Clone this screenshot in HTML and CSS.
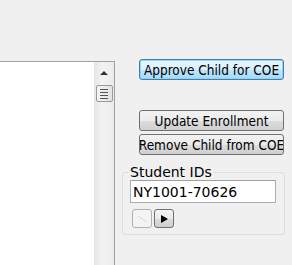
FILE: index.html
```html
<!DOCTYPE html>
<html lang="en">
<head>
 <meta charset="UTF-8">
 <title>Enrollment</title>
 <link rel="stylesheet" href="styles.css">
</head>
<body>
 <div class="window">
  <div class="list">
   <div class="list-body"></div>
   <div class="scrollbar">
    <span class="arrow-up"></span>
    <span class="thumb"><i></i><i></i><i></i><i></i></span>
   </div>
  </div>
  <div class="side">
   <button class="btn btn-default">Approve Child for COE</button>
   <button class="btn btn-update">Update Enrollment</button>
   <button class="btn btn-remove">Remove Child from COE</button>
   <fieldset class="group">
    <legend>Student IDs</legend>
    <input type="text" class="field" value="NY1001-70626">
    <div class="nav">
     <button class="mini" disabled><span class="tri-left"></span></button>
     <button class="mini"><span class="tri-right"></span></button>
    </div>
   </fieldset>
  </div>
 </div>
</body>
</html>
```
FILE: styles.css
```css
body {
 margin: 0;
 background-color: #f0f0f0;
 font-family: 'DejaVu Sans', Verdana, sans-serif;
 font-size: 12px;
 overflow: hidden;
}

.window {
 display: flex;
 padding-top: 59px;
 height: 206px;
}

.list {
 display: flex;
 width: 114px;
 margin-top: 2px;
 border: 1px solid #a0a0a0;
 border-left: none;
 border-bottom: none;
 background-color: #fff;
}

.list-body {
 flex: 1;
}

.scrollbar {
 width: 20px;
 background: linear-gradient(to right, #e6e6e6, #f2f2f2 40%, #ececec);
 display: flex;
 flex-direction: column;
 align-items: center;
}

.arrow-up {
 margin-top: 9px;
 width: 0;
 height: 0;
 border-left: 4px solid transparent;
 border-right: 4px solid transparent;
 border-bottom: 4px solid #333;
}

.thumb {
 margin-top: 10px;
 width: 15px;
 height: 15px;
 border: 1px solid #9a9a9a;
 border-radius: 2px;
 background: linear-gradient(to right, #f4f4f4, #e2e2e2);
 display: flex;
 flex-direction: column;
 align-items: center;
 justify-content: center;
 gap: 2px;
}

.thumb i {
 display: block;
 width: 8px;
 height: 1px;
 background-color: #555;
}

.side {
 width: 162px;
 margin-left: 7px;
 display: flex;
 flex-direction: column;
}

.btn {
 margin-left: 17px;
 width: 145px;
 height: 21px;
 padding: 0;
 font-family: 'DejaVu Sans Condensed', 'DejaVu Sans', sans-serif;
 font-size: 13.5px;
 color: #000;
 border: 1px solid #707070;
 border-radius: 3px;
 background: linear-gradient(#f2f2f2 0%, #ebebeb 50%, #dddddd 51%, #cfcfcf 100%);
 white-space: nowrap;
 overflow: hidden;
 display: flex;
 justify-content: center;
 align-items: center;
}

.btn-default {
 border-color: #3c7fb1;
 background: linear-gradient(#eaf6fd 0%, #d9f0fc 50%, #bee6fd 51%, #a7d9f5 100%);
 box-shadow: inset 0 0 0 1px #8fd3f7;
}

.btn-update {
 margin-top: 30px;
}

.btn-remove {
 margin-top: 3px;
}

.group {
 margin: 10px 0 0 0;
 padding: 0 0 6px 7px;
 width: 154px;
 border: 1px solid #d5dfe5;
 border-radius: 3px;
}

.group legend {
 padding: 0 1px;
 margin-left: -1px;
 font-size: 14px;
 line-height: 15px;
 color: #000;
}

.field {
 display: block;
 box-sizing: border-box;
 width: 146px;
 height: 23px;
 margin-top: 0;
 padding: 0 2px;
 border: 1px solid #abadb3;
 border-top-color: #a0a0a0;
 font-family: inherit;
 font-size: 14px;
 color: #000;
 background-color: #fff;
}

.nav {
 display: flex;
 gap: 2px;
 margin: 6px 0 0 2px;
}

.mini {
 width: 20px;
 height: 19px;
 padding: 0;
 border: 1px solid #707070;
 border-radius: 3px;
 background: linear-gradient(#f2f2f2 0%, #ebebeb 50%, #dddddd 51%, #cfcfcf 100%);
 display: flex;
 align-items: center;
 justify-content: center;
}

.mini:disabled {
 border-color: #adb2b5;
 background: #f4f4f4;
}

.tri-right {
 width: 0;
 height: 0;
 border-top: 4px solid transparent;
 border-bottom: 4px solid transparent;
 border-left: 7px solid #000;
}

.tri-left {
 width: 9px;
 height: 6px;
 background: linear-gradient(to top right, transparent 45%, #c9c9c9 50%, transparent 56%);
}
```
